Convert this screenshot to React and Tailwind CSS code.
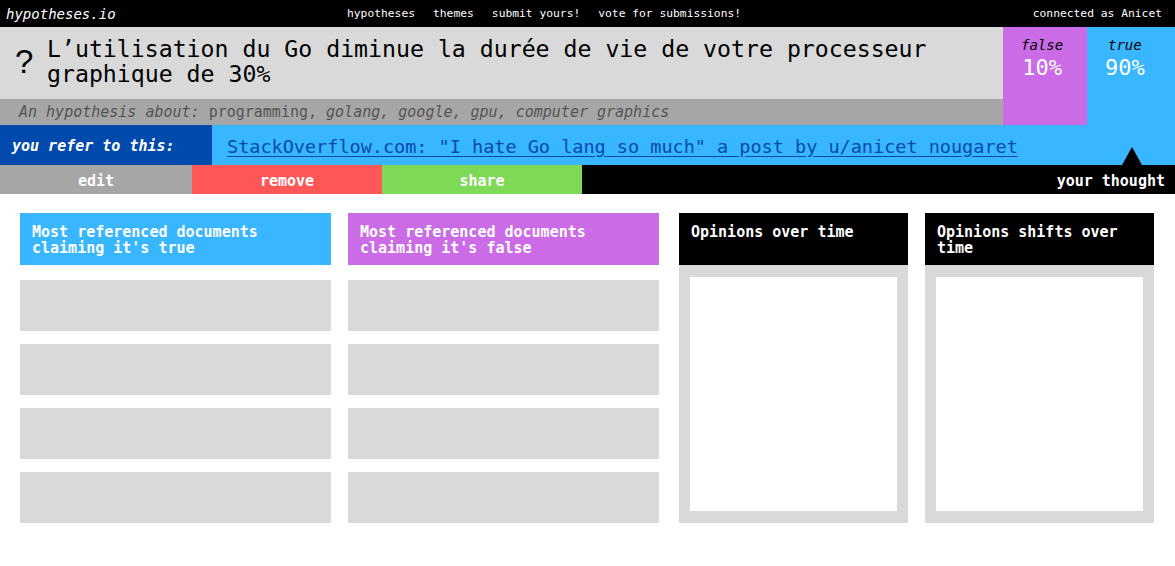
const mono = "font-['DejaVu_Sans_Mono',monospace]"

const navLinks = ["hypotheses", "themes", "submit yours!", "vote for submissions!"]

function HeaderCard({ title, color }) {
  return (
    <div className={`${color} h-[52px] px-[12px] pt-[11px] text-[15px] leading-[16px] font-bold text-white`}>
      {title}
    </div>
  )
}

function DocColumn({ title, color }) {
  return (
    <div className="flex w-[311px] flex-col">
      <HeaderCard title={title} color={color} />
      <div className="mt-[15px] flex flex-col gap-[13px]">
        {[0, 1, 2, 3].map((i) => (
          <div key={i} className="h-[51px] bg-[#d9d9d9]" />
        ))}
      </div>
    </div>
  )
}

function ChartColumn({ title }) {
  return (
    <div className="flex w-[229px] flex-col">
      <HeaderCard title={title} color="bg-black" />
      <div className="h-[258px] bg-[#d9d9d9] px-[11px] py-[12px]">
        <div className="h-full bg-white" />
      </div>
    </div>
  )
}

export default function App() {
  return (
    <div className={`${mono} min-h-[566px] w-[1175px] bg-white`}>
      {/* top bar */}
      <div className="flex h-[27px] items-center bg-black pl-[6px] pr-[13px] pt-[1px] text-white">
        <span className="w-[341px] shrink-0 text-[14px] italic">hypotheses.io</span>
        <nav className="flex gap-[18px] text-[11.3px]">
          {navLinks.map((l) => (
            <span key={l}>{l}</span>
          ))}
        </nav>
        <span className="ml-auto text-[11.3px]">connected as Anicet</span>
      </div>

      {/* hypothesis header */}
      <div className="flex h-[98px]">
        <div className="flex w-[1003px] flex-col bg-[#d9d9d9]">
          <div className="flex h-[72px] items-center pb-[4px]">
            <span className="w-[47px] shrink-0 pl-[15px] font-['Liberation_Sans',sans-serif] text-[33px] leading-none">?</span>
            <h1 className="text-[23.2px] leading-[25px] text-black">
              L’utilisation du Go diminue la durée de vie de votre processeur graphique de 30%
            </h1>
          </div>
          <div className="flex h-[26px] items-center whitespace-pre bg-[#a6a6a6] pl-[19px] text-[15px] text-[#545454]">
            <span className="italic">An hypothesis about:</span>
            <span> programming, </span>
            <span className="italic">golang, google, gpu, computer graphics</span>
          </div>
        </div>
        <div className="w-[84px] bg-[#cb6ce6] pl-[18px] pt-[6px]">
          <div className="inline-flex flex-col items-center">
            <span className="text-[14px] leading-[18px] italic">false</span>
            <span className="mt-[2px] text-[22px] leading-[24px] text-white">10%</span>
          </div>
        </div>
        <div className="flex-1 bg-[#38b6ff] pl-[18px] pt-[6px]">
          <div className="inline-flex flex-col items-center">
            <span className="text-[14px] leading-[18px] italic">true</span>
            <span className="mt-[2px] text-[22px] leading-[24px] text-white">90%</span>
          </div>
        </div>
      </div>

      {/* reference */}
      <div className="relative flex h-[40px]">
        <div className="flex w-[212px] items-center bg-[#004aad] pl-[12px] pt-[3px] text-[15px] font-bold italic text-white">
          you refer to this:
        </div>
        <div className="flex flex-1 items-center bg-[#38b6ff] pl-[15px] pt-[3px]">
          <a href="#" className="text-[18.5px] text-[#004aad] underline underline-offset-[3px]">
            StackOverflow.com: "I hate Go lang so much" a post by u/anicet_nougaret
          </a>
        </div>
        <div className="absolute bottom-0 left-[1122px] h-0 w-0 border-x-[10px] border-b-[18px] border-x-transparent border-b-black" />
      </div>

      {/* actions */}
      <div className="flex h-[29px] pt-0 text-[15px] font-bold text-white">
        <button className="w-[192px] bg-[#a6a6a6] pt-[3px]">edit</button>
        <button className="w-[190px] bg-[#ff5757] pt-[3px]">remove</button>
        <button className="w-[200px] bg-[#7ed957] pt-[3px]">share</button>
        <div className="flex flex-1 items-center justify-end bg-black pr-[10px] pt-[3px]">your thought</div>
      </div>

      {/* content */}
      <div className="flex gap-[17px] px-[20px] pt-[19px]">
        <DocColumn title="Most referenced documents claiming it's true" color="bg-[#38b6ff]" />
        <div className="mr-[3px]">
          <DocColumn title="Most referenced documents claiming it's false" color="bg-[#cb6ce6]" />
        </div>
        <ChartColumn title="Opinions over time" />
        <ChartColumn title="Opinions shifts over time" />
      </div>
    </div>
  )
}
